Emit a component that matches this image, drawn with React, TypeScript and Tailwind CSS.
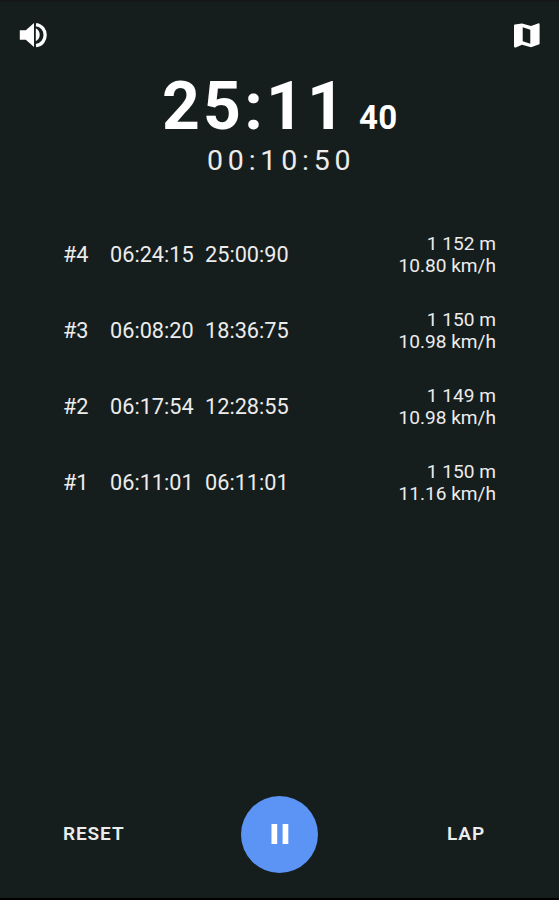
import React from 'react';

type Lap = {
  id: number;
  time: string;
  total: string;
  distance: string;
  speed: string;
};

const laps: Lap[] = [
  { id: 4, time: '06:24:15', total: '25:00:90', distance: '1 152 m', speed: '10.80 km/h' },
  { id: 3, time: '06:08:20', total: '18:36:75', distance: '1 150 m', speed: '10.98 km/h' },
  { id: 2, time: '06:17:54', total: '12:28:55', distance: '1 149 m', speed: '10.98 km/h' },
  { id: 1, time: '06:11:01', total: '06:11:01', distance: '1 150 m', speed: '11.16 km/h' },
];

const SoundIcon: React.FC = () => (
  <svg viewBox="0 0 32 32" className="size-8" fill="none">
    <path d="M2.8 10.2h6L17 3v24l-8.2-7.2h-6z" fill="currentColor" />
    <path d="M18.8 8.2c5.2 2.4 5.2 10.6 0 13z" fill="currentColor" />
    <path d="M19 4.6c12.2 1.6 12.2 19.4 0 21" stroke="currentColor" strokeWidth="3.3" />
  </svg>
);

const MapIcon: React.FC = () => (
  <svg viewBox="0 0 32 32" className="size-8" fill="currentColor" fillRule="evenodd">
    <path d="M4.9 4.4 12 3.6l9 2.5 7-2.7q1.6-.4 1.6 1v19q0 .9-.9 1.2l-7.7 2.7-9-2.6-6.2 2.7q-1.8.4-1.8-1.2V5.4q0-.8.9-1zM12.7 7.3v14l7.6 2.5V9.7z" />
  </svg>
);

const PauseIcon: React.FC = () => (
  <svg viewBox="0 0 32 32" className="size-8" fill="currentColor">
    <path d="M7.5 6h5.7v20H7.5zM18.6 6h5.7v20h-5.7z" />
  </svg>
);

const LapRow: React.FC<{ lap: Lap }> = ({ lap }) => (
  <li className="flex h-[76px] items-center pt-px text-[21.7px] whitespace-nowrap">
    <span className="w-[47px] shrink-0 pt-px">#{lap.id}</span>
    <span className="w-[95px] shrink-0 pt-px">{lap.time}</span>
    <span className="pt-px">{lap.total}</span>
    <div className="ml-auto text-right text-[19.1px] leading-[22px]">
      <div>{lap.distance}</div>
      <div>{lap.speed}</div>
    </div>
  </li>
);

const App: React.FC = () => {
  return (
    <div className="flex h-[900px] w-[559px] flex-col overflow-hidden border-t-2 border-b-2 border-t-[#15171a] border-b-black bg-[#161e1d] font-['Roboto',sans-serif] text-[#ececec]">
      <header className="flex h-[68px] items-center justify-between pr-[17px] pl-[17px] text-white">
        <button aria-label="Sound">
          <SoundIcon />
        </button>
        <button aria-label="Map">
          <MapIcon />
        </button>
      </header>

      <div className="flex h-[66px] items-baseline pl-[162px] font-bold text-white">
        <span className="w-[197px] text-[66px] leading-[73px] tracking-[3.2px]">25:11</span>
        <span className="text-[33px] tracking-[0.4px]">40</span>
      </div>
      <div className="pl-[207px] text-[28.5px] leading-[50px] tracking-[4.8px]">00:10:50</div>

      <ul className="mt-[30px] flex-1 pr-[63px] pl-[63px]">
        {laps.map((lap) => (
          <LapRow key={lap.id} lap={lap} />
        ))}
      </ul>

      <footer className="flex h-[128px] items-center justify-between pr-[74px] pl-[62px] text-[19px] font-semibold">
        <button className="w-[179px] pt-px pl-px text-left tracking-[0.9px]">RESET</button>
        <button
          aria-label="Pause"
          className="flex size-[77px] items-center justify-center rounded-full bg-[#5c94f5] text-white"
        >
          <PauseIcon />
        </button>
        <button className="w-[167px] pt-px text-right tracking-[0.9px]">LAP</button>
      </footer>
    </div>
  );
};

export default App;
